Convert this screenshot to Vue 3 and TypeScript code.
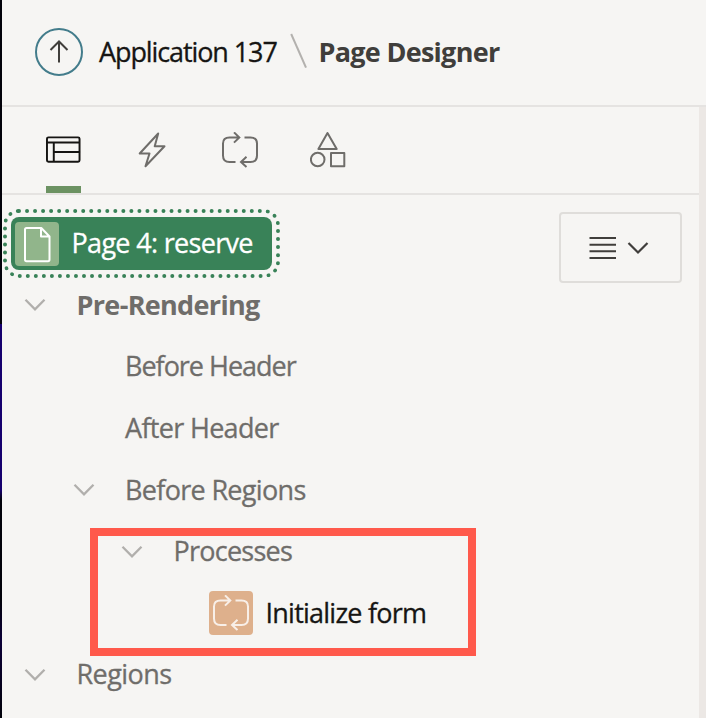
<script setup lang="ts">
interface TreeNode {
  label: string
  level: number
  kind: 'page' | 'group' | 'leaf' | 'process'
  tone: string
}

const nodes: TreeNode[] = [
  { label: 'Page 4: reserve', level: 0, kind: 'page', tone: 'page-label' },
  { label: 'Pre-Rendering', level: 0, kind: 'group', tone: 'strong' },
  { label: 'Before Header', level: 1, kind: 'leaf', tone: 'before-header' },
  { label: 'After Header', level: 1, kind: 'leaf', tone: 'after-header' },
  { label: 'Before Regions', level: 1, kind: 'group', tone: 'before-regions' },
  { label: 'Processes', level: 2, kind: 'group', tone: 'processes' },
  { label: 'Initialize form', level: 3, kind: 'process', tone: 'dark' },
  { label: 'Regions', level: 0, kind: 'group', tone: 'regions' },
]
</script>

<template>
  <div class="window">
    <div class="edge"></div>
    <div class="designer">
      <header class="crumbs">
        <button class="up" aria-label="Up">
          <svg width="48" height="48" viewBox="0 0 48 48">
            <circle cx="24" cy="24" r="23" fill="none" stroke="#437c8b" stroke-width="2" />
            <path d="M24 34.500V14M15.500 22L24 13.500L32.500 22" fill="none" stroke="#403e3b" stroke-width="2" />
          </svg>
        </button>
        <span class="crumb">Application 137</span>
        <svg class="slash" width="18" height="36" viewBox="0 0 18 36">
          <path d="M1.200 1L16 34.700" stroke="#b3b1ae" stroke-width="2" />
        </svg>
        <span class="crumb current">Page Designer</span>
      </header>

      <div class="body">
        <main class="panel">
          <nav class="tabs">
            <button class="tab active" aria-label="Rendering">
              <svg width="36" height="36" viewBox="0 0 36 36" fill="none" stroke="#161513" stroke-width="2">
                <rect x="1" y="5" width="33.500" height="25" rx="1.500" />
                <path d="M1 10.300H35M8 10.300V30M8 20H35" />
              </svg>
            </button>
            <button class="tab" aria-label="Dynamic Actions">
              <svg width="36" height="36" viewBox="0 0 36 36" fill="none" stroke="#6f6d6a" stroke-width="2" stroke-linejoin="round">
                <path d="M24.200 1.500L5.700 21.500H15.500L11.500 34.300L30.500 14.300H20.700Z" />
              </svg>
            </button>
            <button class="tab" aria-label="Processing">
              <svg width="36" height="36" viewBox="0 0 36 36" fill="none" stroke="#6f6d6a" stroke-width="2">
                <path d="M13.500 30H7.500Q1 30 1 23.500V11.500Q1 5.500 7.500 5.500H17M12 .400L17.300 5.500L12 10.600M22.500 5.500H28.500Q35 5.500 35 11.500V23.500Q35 30 28.500 30H19M24.500 24.800L19 30L24.500 35.100" />
              </svg>
            </button>
            <button class="tab" aria-label="Page Shared Components">
              <svg width="36" height="36" viewBox="0 0 36 36" fill="none" stroke="#6f6d6a" stroke-width="2" stroke-linejoin="round">
                <path d="M17.500 1L26.700 17H8.400Z" />
                <circle cx="7.700" cy="27.500" r="6.800" />
                <path d="M21 21H34.300V34.300H21Z" />
              </svg>
            </button>
          </nav>

          <div class="content">
            <ul class="tree">
              <li v-for="node in nodes" :key="node.label" class="row" :class="['level-' + node.level, node.kind]">
                <div v-if="node.kind === 'page'" class="selected">
                  <span class="page-icon">
                    <svg width="44" height="44" viewBox="0 0 44 44" fill="none" stroke="#fff" stroke-width="2" stroke-linejoin="round">
                      <path d="M11.500 6H26.300L34.500 14.500V37.500Q34.500 39.300 33 39.300H11.500Q10 39.300 10 37.500V7.500Q10 6 11.500 6ZM26 6V14.500H34.500" />
                    </svg>
                  </span>
                  <span class="label" :class="node.tone">{{ node.label }}</span>
                </div>
                <template v-else>
                  <span v-if="node.kind !== 'process'" class="toggle">
                    <svg v-if="node.kind === 'group'" width="22" height="14" viewBox="0 0 22 14">
                      <path d="M1.500 1.800L11 11.300L20.500 1.800" fill="none" stroke="#b1afac" stroke-width="2.300" />
                    </svg>
                  </span>
                  <span v-else class="process-icon">
                    <svg width="36" height="36" viewBox="0 0 36 36" fill="none" stroke="#f8efe8" stroke-width="2">
                      <path d="M13.500 30H7.500Q1 30 1 23.500V11.500Q1 5.500 7.500 5.500H17M12 .400L17.300 5.500L12 10.600M22.500 5.500H28.500Q35 5.500 35 11.500V23.500Q35 30 28.500 30H19M24.500 24.800L19 30L24.500 35.100" />
                    </svg>
                  </span>
                  <span class="label" :class="node.tone">{{ node.label }}</span>
                </template>
              </li>
            </ul>
            <button class="menu" aria-label="Menu">
              <svg width="27" height="24" viewBox="0 0 27 24">
                <path d="M.500 2H27M.500 8.800H27M.500 15.300H27M.500 22H27" stroke="#403e3b" stroke-width="2" />
              </svg>
              <svg width="22" height="14" viewBox="0 0 22 14">
                <path d="M1.500 2L11 11.500L20.500 2" fill="none" stroke="#403e3b" stroke-width="2.200" />
              </svg>
            </button>
          </div>
        </main>
        <div class="splitter"></div>
      </div>
    </div>
    <div class="highlight"></div>
  </div>
</template>

<style>
body {
  margin: 0;
  overflow: hidden;
}
</style>

<style scoped>
.window {
  position: relative;
  display: flex;
  width: 706px;
  height: 718px;
  overflow: hidden;
  background: #f6f5f3;
  font-family: "Open Sans", "Noto Sans", sans-serif;
  font-size: 27px;
  color: #161513;
}
.edge {
  flex: none;
  width: 2px;
  background: linear-gradient(#02020a 0 324px, #16006e 324px 490px, #02020a 500px 600px, #0c0038 640px, #02020a);
}
.designer {
  flex: 1;
  display: flex;
  flex-direction: column;
}
button {
  padding: 0;
  border: 0;
  background: none;
}
svg {
  display: block;
}
.crumbs {
  box-sizing: border-box;
  flex: none;
  height: 107px;
  display: flex;
  align-items: center;
  padding: 0 0 1px 33px;
  border-bottom: 2px solid #e5e3e1;
}
.crumb {
  width: 180px;
  margin-left: 16px;
  padding-bottom: 1px;
  white-space: nowrap;
  letter-spacing: -1.1px;
  -webkit-text-stroke: 0.3px currentColor;
}
.slash {
  margin: 0 0 3px 11px;
}
.crumb.current {
  margin-left: 10.500px;
  font-weight: 700;
  letter-spacing: -0.72px;
  -webkit-text-stroke: 0;
  color: #403e3b;
}
.body {
  flex: 1;
  display: flex;
}
.panel {
  flex: 1;
}
.splitter {
  width: 7px;
  background: #ece8e5;
}
.tabs {
  box-sizing: border-box;
  height: 88px;
  display: flex;
  gap: 52px;
  padding-left: 44px;
  border-bottom: 2px solid #e5e3e1;
}
.tab {
  box-sizing: border-box;
  width: 36px;
  padding-top: 25px;
  display: flex;
  align-items: flex-start;
}
.tab.active {
  width: 35px;
  margin-right: 1px;
  border-bottom: 7px solid #6c9262;
}
.content {
  display: flex;
  justify-content: space-between;
  align-items: flex-start;
  padding: 17px 17px 0 0;
}
.tree {
  list-style: none;
  margin: 0;
  padding: 1px 0 0;
}
.row {
  height: 61.6px;
  display: flex;
  align-items: center;
}
.row.page {
  padding-left: 9px;
}
.level-0.group {
  padding-left: 22px;
}
.level-1 {
  padding-left: 70.500px;
}
.level-2 {
  padding-left: 119px;
}
.level-3 {
  padding-left: 207px;
}
.toggle {
  width: 22px;
  margin-right: 30.500px;
}
.label {
  padding-bottom: 2px;
  white-space: nowrap;
  color: #6f6d6a;
  letter-spacing: -0.68px;
  -webkit-text-stroke: 0.3px currentColor;
}
.selected {
  box-sizing: border-box;
  width: 261px;
  height: 53px;
  display: flex;
  align-items: center;
  padding-left: 4px;
  border-radius: 8px;
  background: #398258;
  outline: 4px dotted #398258;
  outline-offset: 4px;
}
.page-icon {
  flex: none;
  width: 44px;
  height: 44px;
  margin-right: 12.500px;
  border-radius: 4px;
  background: #91b58b;
}
.page-label {
  color: #fff;
}
.strong {
  font-weight: 700;
  -webkit-text-stroke: 0;
}
.before-header {
  letter-spacing: -1.02px;
}
.processes {
  letter-spacing: -0.75px;
}
.regions {
  letter-spacing: -0.55px;
}
.process-icon {
  box-sizing: border-box;
  width: 44px;
  height: 44px;
  padding: 4px;
  margin-right: 12.500px;
  border-radius: 4px;
  background: #deb08c;
}
.label.dark {
  letter-spacing: -0.76px;
  color: #161513;
}
.menu {
  box-sizing: border-box;
  width: 123px;
  height: 71px;
  display: flex;
  align-items: center;
  justify-content: center;
  gap: 11px;
  padding-right: 4px;
  border: 2px solid #dfddda;
  border-radius: 4px;
}
.highlight {
  position: absolute;
  left: 90px;
  top: 528px;
  width: 370px;
  height: 112px;
  border: 8px solid #ff594b;
}
</style>
